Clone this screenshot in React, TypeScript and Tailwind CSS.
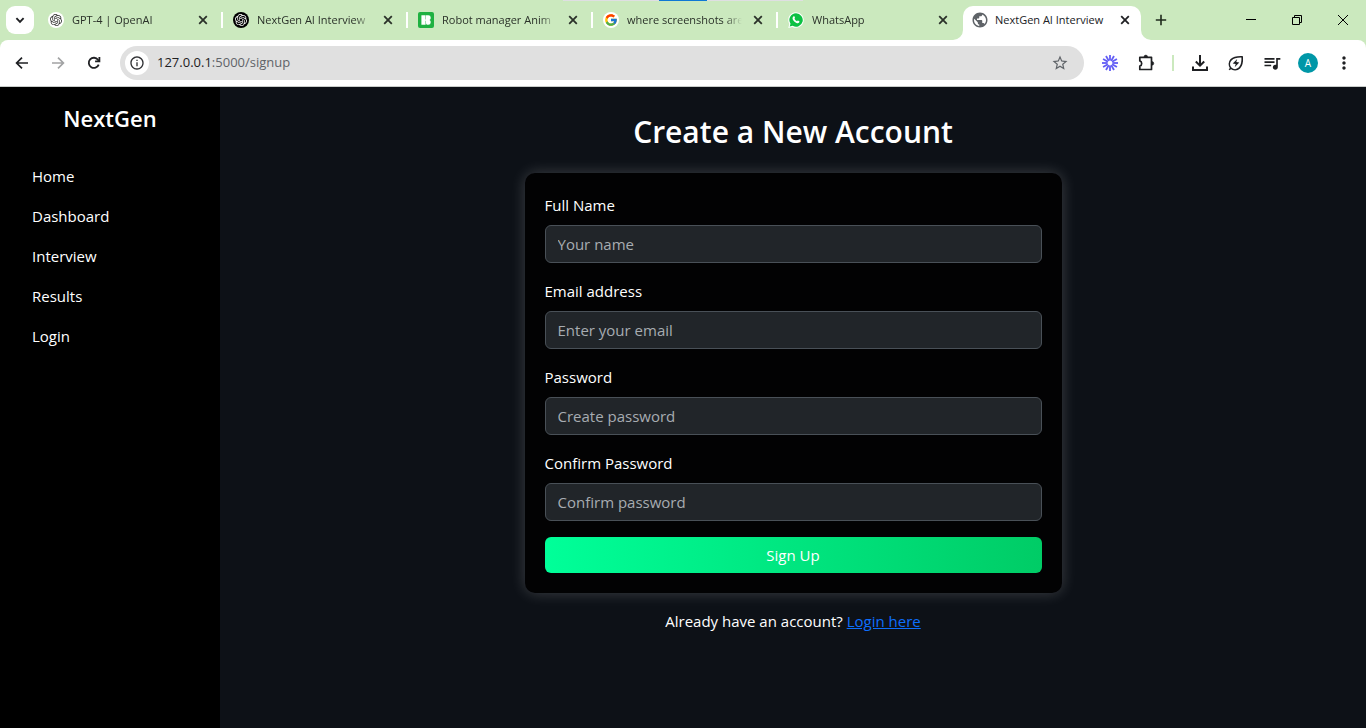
import type { ReactNode } from "react";
import { SiOpenai } from "react-icons/si";
import { FcGoogle } from "react-icons/fc";
import { MdPublic, MdStarBorder, MdQueueMusic, MdMoreVert, MdInfoOutline } from "react-icons/md";

function CloseGlyph() {
  return (
    <svg viewBox="0 0 16 16" className="size-4" fill="none" stroke="currentColor" strokeWidth="1.8">
      <path d="M4.2 4.2l7.6 7.6M11.8 4.2l-7.6 7.6" />
    </svg>
  );
}

function Tab({ icon, title, divider = true }: { icon: ReactNode; title: string; divider?: boolean }) {
  return (
    <div className="flex h-7 w-[185px] min-w-0 items-center pl-[10px]">
      <span className="flex size-4 shrink-0 items-center justify-center">{icon}</span>
      <span className="ml-2 w-[115px] overflow-hidden whitespace-nowrap mask-r-from-85% mask-r-to-100%">{title}</span>
      <button aria-label={`Close ${title}`} className="ml-2 flex size-4 items-center justify-center">
        <CloseGlyph />
      </button>
      {divider && <span className="ml-auto h-4 w-[2px] shrink-0 bg-white" />}
    </div>
  );
}

function ToolButton({ label, children }: { label: string; children: ReactNode }) {
  return (
    <button aria-label={label} className="flex h-9 w-9 shrink-0 items-center justify-center text-[#1f2023]">
      {children}
    </button>
  );
}

function TabStrip() {
  return (
    <div className="relative flex h-10 items-start bg-[#cbe9be] pl-[6px] text-[11px] text-[#2a3129]">
      <div className="absolute top-0 left-[41.2%] flex h-px w-[240px] justify-center bg-[#dfdfe2]">
        <span className="w-12 bg-[#0f78d4]" />
      </div>
      <button aria-label="Search tabs" className="mt-[6px] mr-1 flex size-7 shrink-0 items-center justify-center rounded-[9px] bg-white">
        <svg viewBox="0 0 12 12" className="size-3" fill="none" stroke="#1f2023" strokeWidth="1.9">
          <path d="M2.4 4.2L6 7.8l3.6-3.6" />
        </svg>
      </button>
      <div className="flex min-w-0 pt-[6px]">
        <Tab
          title="GPT-4 | OpenAI"
          icon={
            <span className="flex size-4 items-center justify-center rounded-full bg-white text-[#333]">
              <SiOpenai className="size-3" />
            </span>
          }
        />
        <Tab
          title="NextGen AI Interview"
          icon={
            <span className="flex size-4 items-center justify-center rounded-full bg-black text-white">
              <SiOpenai className="size-3" />
            </span>
          }
        />
        <Tab
          title="Robot manager Anim"
          icon={
            <svg viewBox="0 0 16 16" className="size-4">
              <rect width="16" height="16" rx="2" fill="#1fb141" />
              <path
                fill="#fff"
                d="M3.4 3.200H7.600V12.800H3.400zM8 3.200h2.400A2.300 2.300 0 0 1 12.700 5.500V6.200A1.900 1.900 0 0 1 11.500 8 1.900 1.900 0 0 1 12.700 9.800V10.500A2.300 2.300 0 0 1 10.400 12.800H8.800L8 11.600V8.800L7.400 8 8 7.200z"
              />
            </svg>
          }
        />
        <Tab
          title="where screenshots are"
          icon={
            <span className="flex size-4 items-center justify-center rounded-full bg-white">
              <FcGoogle className="size-[14px]" />
            </span>
          }
        />
        <Tab
          title="WhatsApp"
          divider={false}
          icon={
            <svg viewBox="0 0 16 16" className="size-4">
              <path d="M8 .2a7.800 7.800 0 1 1-3.700 14.700L.3 15.900l1-4A7.800 7.800 0 0 1 8 .2z" fill="#fff" />
              <path d="M8 1.300a6.700 6.700 0 1 1-3.300 12.500L1.700 14.600l.8-2.900A6.700 6.700 0 0 1 8 1.300z" fill="#0cc143" />
              <path
                d="M5.700 4.300c.4-.2.700 0 .8.300l.5 1.200c.1.300-.5.800-.5 1 .5 1.100 1.300 1.900 2.500 2.400.3.100.7-.8 1-.7l1.300.7c.3.200.1 1-.2 1.400-.6.700-1.600.8-2.600.4C6.700 10.300 5.500 9 4.800 7.500c-.5-1.200-.2-2.600.9-3.200z"
                fill="#fff"
              />
            </svg>
          }
        />
      </div>
      <div className="relative mt-[6px] flex h-[34px] w-[178px] shrink-0 items-center rounded-t-[10px] bg-white pb-[6px] pl-2 text-[#202124]">
        <svg viewBox="0 0 10 10" className="absolute bottom-0 -left-[10px] size-[10px]" fill="#fff">
          <path d="M10 0v10H0A10 10 0 0 0 10 0z" />
        </svg>
        <svg viewBox="0 0 10 10" className="absolute -right-[10px] bottom-0 size-[10px]" fill="#fff">
          <path d="M0 0v10h10A10 10 0 0 1 0 0z" />
        </svg>
        <MdPublic className="size-[18px] shrink-0 text-[#5f6368]" />
        <span className="ml-[6px] w-[114px] overflow-hidden whitespace-nowrap">NextGen AI Interview</span>
        <button aria-label="Close current tab" className="ml-2 flex size-4 items-center justify-center">
          <CloseGlyph />
        </button>
      </div>
      <button aria-label="New tab" className="mt-[6px] ml-[6px] flex size-7 shrink-0 items-center justify-center">
        <svg viewBox="0 0 12 12" className="size-3" stroke="#1f2a1c" strokeWidth="1.600">
          <path d="M6 .8v10.400M.8 6h10.400" />
        </svg>
      </button>
      <div className="ml-auto flex text-black">
        <button aria-label="Minimize" className="flex h-10 w-[46px] items-center justify-center">
          <svg viewBox="0 0 10 10" className="size-[10px]" stroke="currentColor">
            <path d="M0 4.500h10" />
          </svg>
        </button>
        <button aria-label="Restore" className="flex h-10 w-[46px] items-center justify-center">
          <svg viewBox="0 0 10 10" className="size-[10px]" fill="none" stroke="currentColor">
            <path d="M.5 2.500h7v7h-7zM2.500 2.500v-2h7v7h-2" />
          </svg>
        </button>
        <button aria-label="Close window" className="flex h-10 w-[46px] items-center justify-center">
          <svg viewBox="0 0 10 10" className="size-[10px]" stroke="currentColor">
            <path d="M0 0l10 10M10 0L0 10" />
          </svg>
        </button>
      </div>
    </div>
  );
}

function Toolbar() {
  const rays = [0, 30, 60, 90, 120, 150, 180, 210, 240, 270, 300, 330];
  return (
    <div className="bg-[#cbe9be]">
      <div className="flex h-[47px] items-center rounded-t-lg border-b border-[#c9cdca] bg-white px-1">
        <ToolButton label="Back">
          <svg viewBox="0 0 16 16" className="size-4" fill="none" stroke="currentColor" strokeWidth="1.700">
            <path d="M14 8H3M8 2.600L2.600 8 8 13.400" />
          </svg>
        </ToolButton>
        <ToolButton label="Forward">
          <svg viewBox="0 0 16 16" className="size-4" fill="none" stroke="#a2a3a4" strokeWidth="1.700">
            <path d="M2 8h11M8 2.600L13.400 8 8 13.400" />
          </svg>
        </ToolButton>
        <ToolButton label="Reload">
          <svg viewBox="0 0 16 16" className="size-4" fill="none" stroke="currentColor" strokeWidth="1.800">
            <path d="M12.700 9.600A5.100 5.100 0 1 1 12 4.800L13.300 6.200" />
            <path d="M13.400 2v4.300H9.100" />
          </svg>
        </ToolButton>
        <div className="mx-2 flex h-[34px] min-w-0 grow items-center rounded-full bg-[#e0e0e0] px-[5px]">
          <button aria-label="Site information" className="flex size-6 shrink-0 items-center justify-center rounded-full bg-white">
            <MdInfoOutline className="size-4 text-[#303134]" />
          </button>
          <div className="relative ml-2 grow">
            <input
              aria-label="Address"
              defaultValue="127.0.0.1:5000/signup"
              className="w-full bg-transparent text-[13px] text-transparent outline-none"
            />
            <span aria-hidden="true" className="pointer-events-none absolute inset-0 flex items-center text-[13px] text-[#5f6368]">
              <span className="text-[#1f2023]">127.0.0.1</span>:5000/signup
            </span>
          </div>
          <button aria-label="Bookmark" className="mr-[10px] flex size-[18px] items-center justify-center text-[#5f6368]">
            <MdStarBorder className="size-[18px]" />
          </button>
        </div>
        <ToolButton label="Loom">
          <svg viewBox="0 0 16 16" className="size-4" stroke="#625df5" strokeWidth="1.800">
            {rays.map((angle) => (
              <path key={angle} d="M8 0v5.600" transform={`rotate(${angle} 8 8)`} />
            ))}
          </svg>
        </ToolButton>
        <ToolButton label="Extensions">
          <svg viewBox="0 0 18 18" className="size-[18px]" fill="none" stroke="currentColor" strokeWidth="1.700" strokeLinejoin="round">
            <path d="M2.800 3.300H14.500V15.500H2.800V12.200C5.300 11.600 5.300 7.500 2.800 6.900z" />
            <path d="M7 2.900a1.800 1.800 0 0 1 3.600 0zM15 7.600a1.800 1.800 0 0 1 0 3.600z" fill="currentColor" strokeWidth="0.500" />
          </svg>
        </ToolButton>
        <span className="mx-2 h-4 w-[2px] shrink-0 bg-[#cbe9be]" />
        <ToolButton label="Downloads">
          <svg viewBox="0 0 18 18" className="size-[18px]" fill="none" stroke="currentColor" strokeWidth="2">
            <path d="M9 1v10.500M4.800 7.500L9 11.700l4.200-4.200M2 12.500V16h14v-3.500" />
          </svg>
        </ToolButton>
        <ToolButton label="Energy saver">
          <svg viewBox="0 0 16 16" className="size-4" fill="none" stroke="currentColor" strokeWidth="1.600" strokeLinejoin="round">
            <path d="M2.800 13.200C.8 10.600.9 7 3.200 4.600 5.800 2 9.600 1.600 14.200 1.800c.3 4.600 0 8.500-2.700 11.100-2.400 2.300-6.100 2.400-8.700.3zM2.800 13.200L1.200 14.800" />
            <path d="M9.200 3.900L4.700 8.500l3 .6-1 3.200 4.600-4.800-3-.6z" fill="currentColor" stroke="none" />
          </svg>
        </ToolButton>
        <ToolButton label="Media">
          <MdQueueMusic className="size-5" />
        </ToolButton>
        <ToolButton label="Profile">
          <span className="flex size-5 items-center justify-center rounded-full bg-[#0097a7] text-[10px] text-white">A</span>
        </ToolButton>
        <ToolButton label="Menu">
          <MdMoreVert className="size-5" />
        </ToolButton>
      </div>
    </div>
  );
}

const links = ["Home", "Dashboard", "Interview", "Results", "Login"];

const fields = [
  { id: "name", label: "Full Name", type: "text", placeholder: "Your name" },
  { id: "email", label: "Email address", type: "email", placeholder: "Enter your email" },
  { id: "password", label: "Password", type: "password", placeholder: "Create password" },
  { id: "confirm", label: "Confirm Password", type: "password", placeholder: "Confirm password" },
];

export default function App() {
  return (
    <div className="flex min-h-screen flex-col bg-[#0d1117] font-['Open_Sans','Noto_Sans',sans-serif]">
      <header>
        <TabStrip />
        <Toolbar />
      </header>
      <div className="flex grow text-[15px] leading-6 text-white">
        <aside className="w-[220px] shrink-0 bg-black px-5 pt-[15px]">
          <h2 className="text-center text-[22px] leading-8 font-semibold">NextGen</h2>
          <nav className="mt-[22px] flex flex-col">
            {links.map((link) => (
              <a key={link} href={`#${link.toLowerCase()}`} className="px-3 py-2">
                {link}
              </a>
            ))}
          </nav>
        </aside>
        <main className="flex grow flex-col items-center px-9 pt-[26px] pb-6">
          <h1 className="mb-[22px] text-[30px] leading-[38px] font-semibold">Create a New Account</h1>
          <form
            onSubmit={(event) => event.preventDefault()}
            className="w-1/2 rounded-[10px] bg-[#020203] p-5 shadow-[0_0_15px_rgba(255,255,255,0.2)]"
          >
            {fields.map((field) => (
              <div key={field.id} className="mb-4">
                <label htmlFor={field.id} className="mb-2 block">
                  {field.label}
                </label>
                <input
                  id={field.id}
                  type={field.type}
                  placeholder={field.placeholder}
                  className="block h-[38px] w-full rounded-md border border-[#495057] bg-[#212529] px-3 placeholder:text-[#a7acb1]"
                />
              </div>
            ))}
            <button type="submit" className="block h-9 w-full rounded-md bg-linear-to-r/srgb from-[#00ff99] to-[#00cc66]">
              Sign Up
            </button>
          </form>
          <p className="mt-4">
            Already have an account?{" "}
            <a href="#login" className="text-[#0d6efd] underline">
              Login here
            </a>
          </p>
        </main>
      </div>
    </div>
  );
}
